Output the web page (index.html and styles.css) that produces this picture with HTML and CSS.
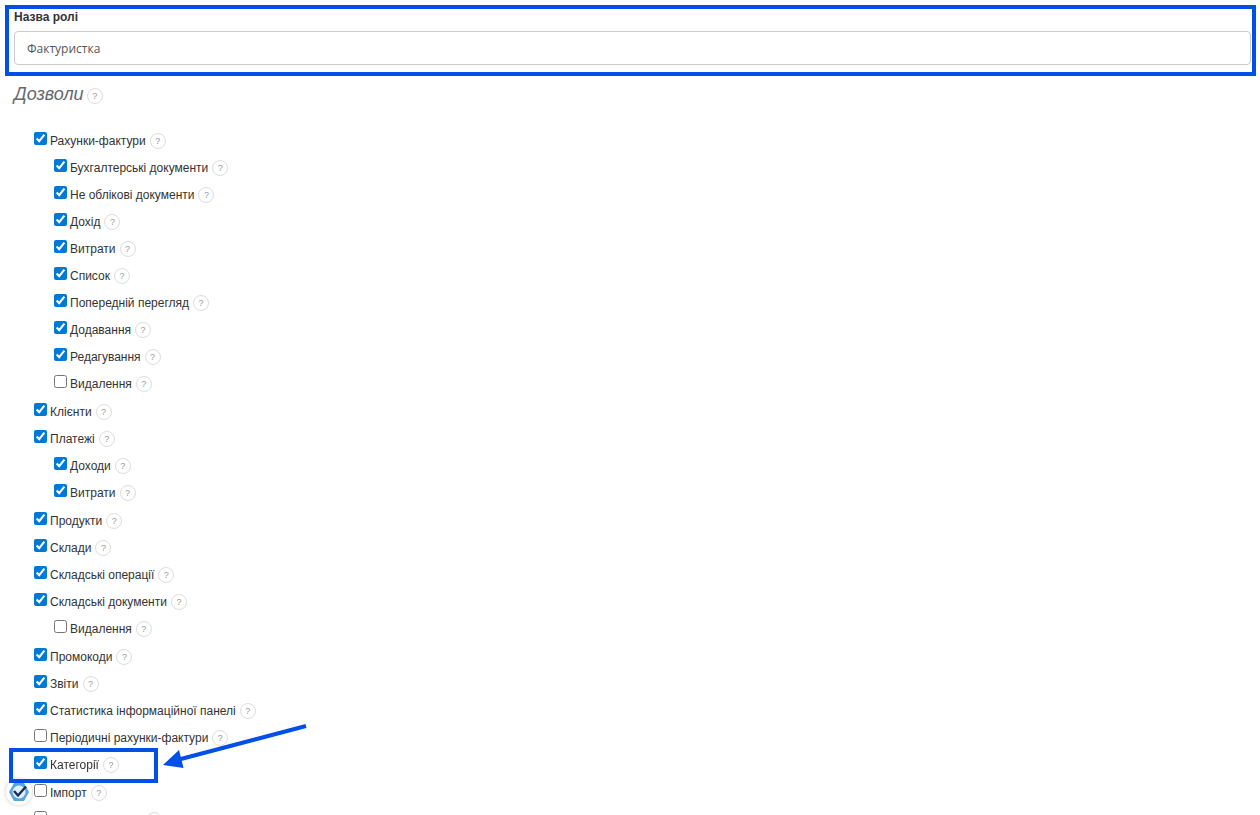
FILE: index.html
```
<!DOCTYPE html>
<html lang="uk">
<head>
  <meta charset="utf-8">
  <title>Назва ролі</title>
  <link rel="stylesheet" href="styles.css">
</head>
<body>
  <form class="role-form">
    <div class="role-name marked">
      <label for="role-name">Назва ролі</label>
      <input type="text" id="role-name" value="Фактуристка">
    </div>

    <h2>Дозволи <span class="hint">?</span></h2>

    <ul class="permissions">
      <li>
        <div class="row"><input type="checkbox" id="invoices" checked><label for="invoices">Рахунки-фактури</label><span class="hint">?</span></div>
        <ul>
          <li><div class="row"><input type="checkbox" id="accounting" checked><label for="accounting">Бухгалтерські документи</label><span class="hint">?</span></div></li>
          <li><div class="row"><input type="checkbox" id="non-accounting" checked><label for="non-accounting">Не облікові документи</label><span class="hint">?</span></div></li>
          <li><div class="row"><input type="checkbox" id="income" checked><label for="income">Дохід</label><span class="hint">?</span></div></li>
          <li><div class="row"><input type="checkbox" id="expenses" checked><label for="expenses">Витрати</label><span class="hint">?</span></div></li>
          <li><div class="row"><input type="checkbox" id="list" checked><label for="list">Список</label><span class="hint">?</span></div></li>
          <li><div class="row"><input type="checkbox" id="preview" checked><label for="preview">Попередній перегляд</label><span class="hint">?</span></div></li>
          <li><div class="row"><input type="checkbox" id="add" checked><label for="add">Додавання</label><span class="hint">?</span></div></li>
          <li><div class="row"><input type="checkbox" id="edit" checked><label for="edit">Редагування</label><span class="hint">?</span></div></li>
          <li><div class="row"><input type="checkbox" id="delete"><label for="delete">Видалення</label><span class="hint">?</span></div></li>
        </ul>
      </li>
      <li><div class="row"><input type="checkbox" id="clients" checked><label for="clients">Клієнти</label><span class="hint">?</span></div></li>
      <li>
        <div class="row"><input type="checkbox" id="payments" checked><label for="payments">Платежі</label><span class="hint">?</span></div>
        <ul>
          <li><div class="row"><input type="checkbox" id="payments-income" checked><label for="payments-income">Доходи</label><span class="hint">?</span></div></li>
          <li><div class="row"><input type="checkbox" id="payments-expenses" checked><label for="payments-expenses">Витрати</label><span class="hint">?</span></div></li>
        </ul>
      </li>
      <li><div class="row"><input type="checkbox" id="products" checked><label for="products">Продукти</label><span class="hint">?</span></div></li>
      <li><div class="row"><input type="checkbox" id="warehouses" checked><label for="warehouses">Склади</label><span class="hint">?</span></div></li>
      <li><div class="row"><input type="checkbox" id="warehouse-actions" checked><label for="warehouse-actions">Складські операції</label><span class="hint">?</span></div></li>
      <li>
        <div class="row"><input type="checkbox" id="warehouse-docs" checked><label for="warehouse-docs">Складські документи</label><span class="hint">?</span></div>
        <ul>
          <li><div class="row"><input type="checkbox" id="warehouse-docs-delete"><label for="warehouse-docs-delete">Видалення</label><span class="hint">?</span></div></li>
        </ul>
      </li>
      <li><div class="row"><input type="checkbox" id="promo" checked><label for="promo">Промокоди</label><span class="hint">?</span></div></li>
      <li><div class="row"><input type="checkbox" id="reports" checked><label for="reports">Звіти</label><span class="hint">?</span></div></li>
      <li><div class="row"><input type="checkbox" id="dashboard" checked><label for="dashboard">Статистика інформаційної панелі</label><span class="hint">?</span></div></li>
      <li><div class="row"><input type="checkbox" id="recurring"><label for="recurring">Періодичні рахунки-фактури</label><span class="hint">?</span></div></li>
      <li class="categories">
        <div class="row"><input type="checkbox" id="categories" checked><label for="categories">Категорії</label><span class="hint">?</span></div>
        <div class="category-mark"></div>
        <svg class="arrow" width="146" height="48" viewBox="0 0 146 48">
          <path d="M143 3L16 36.500" stroke="#004fe8" stroke-width="4"/>
          <path d="M0 42L16 27L20.500 45z" fill="#004fe8"/>
        </svg>
      </li>
      <li><div class="row"><input type="checkbox" id="import"><label for="import">Імпорт</label><span class="hint">?</span></div></li>
      <li><div class="row"><input type="checkbox" id="records"><label for="records">Системні записи</label><span class="hint">?</span></div></li>
    </ul>
  </form>

  <button type="button" class="widget" aria-label="Помічник">
    <svg width="20" height="20" viewBox="0 0 20 20">
      <path d="M5 1H15L20 10L15 19H5L0 10z" fill="#5aa5dc"/>
      <circle cx="10" cy="10" r="6.500" fill="#e3f0fa"/>
      <path d="M5 9L9 13.500L17 4.500" fill="none" stroke="#12305c" stroke-width="2.400"/>
    </svg>
  </button>
</body>
</html>
```

FILE: styles.css
```
* {
  box-sizing: border-box;
}

body {
  margin: 0;
  height: 100vh;
  overflow: hidden;
  background: #fff;
  color: #333;
  font: 12px/18px "Liberation Sans", Arial, sans-serif;
}

.role-form {
  padding: 5px 4px 0 5px;
}

.role-name {
  padding: 0 1px 7px 5px;
}

.marked {
  border: 4px solid #004fe8;
}

.role-name label {
  display: block;
  height: 22px;
  line-height: 16px;
  font-weight: bold;
}

.role-name input {
  display: block;
  width: 100%;
  height: 34px;
  padding: 0 12px;
  border: 1px solid #ccc;
  border-radius: 4px;
  color: #555;
  font: 12px "Open Sans", "Noto Sans", sans-serif;
}

h2 {
  display: flex;
  align-items: center;
  gap: 3px;
  margin: 6px 0 0 9px;
  color: #666870;
  font-size: 18px;
  font-style: italic;
  font-weight: normal;
  line-height: 24px;
}

.hint {
  width: 16px;
  height: 16px;
  border: 1px solid #ddd;
  border-radius: 50%;
  color: #999;
  font: 9px/14px "Liberation Sans", Arial, sans-serif;
  text-align: center;
}

h2 .hint {
  margin-top: 4px;
}

.permissions {
  margin: 21px 0 0;
  padding: 0 0 0 29px;
  list-style: none;
}

.permissions ul {
  margin: 0;
  padding: 0 0 1px 20px;
  list-style: none;
}

.row {
  display: flex;
  align-items: center;
  height: 27px;
}

.row input {
  width: 13px;
  height: 13px;
  margin: 0 3px 4px 0;
  accent-color: #0078d7;
}

.row .hint {
  margin-left: 4px;
}

/* highlight round the category permission */
.categories {
  position: relative;
  z-index: 1;
  padding-bottom: 1px;
}

.category-mark {
  position: absolute;
  top: -3px;
  left: -25px;
  width: 149px;
  height: 35px;
  border: 4px solid #004fe8;
  pointer-events: none;
}

.arrow {
  position: absolute;
  top: -28px;
  left: 129px;
}

.widget {
  position: fixed;
  bottom: 10px;
  left: 6px;
  display: flex;
  align-items: center;
  justify-content: center;
  width: 26px;
  height: 26px;
  padding: 0;
  border: 0;
  border-radius: 50%;
  background: #fff;
  box-shadow: 0 0 4px #ccc;
}
```
